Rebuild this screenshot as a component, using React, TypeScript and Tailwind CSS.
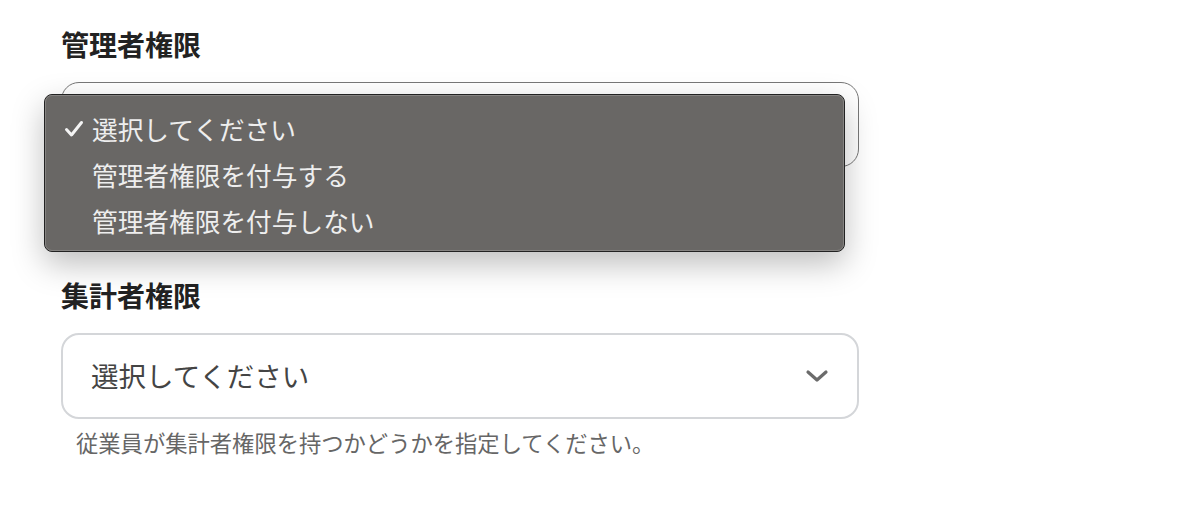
import React from 'react'

const font = { fontFamily: '"Noto Sans CJK JP", "Noto Sans", sans-serif' }

const Chevron = () => (
  <svg width="24" height="14" viewBox="0 0 24 14" fill="none">
    <path d="M3 3 L12 11 L21 3" stroke="#6b6b6b" strokeWidth="3.2" strokeLinecap="round" strokeLinejoin="round" />
  </svg>
)

const Check = () => (
  <svg width="20" height="18" viewBox="0 0 20 18" fill="none">
    <path d="M2.5 9.5 L7.5 15 L17.5 2.5" stroke="#f4f4f4" strokeWidth="3" strokeLinecap="round" strokeLinejoin="round" />
  </svg>
)

// hidden: content that sits under the open menu
const Field = ({ label, help, focused }: { label: string; help: string; focused?: boolean }) => (
  <div className="flex flex-col">
    <div className="h-[36px] leading-[36px] text-[28px] font-bold text-[#222]">{label}</div>
    <div
      className={
        focused
          ? 'mt-[20px] h-[85px] w-[798px] rounded-[18px] border-[1.5px] border-[#777] bg-white flex items-center justify-between px-[28px]'
          : 'mt-[20px] h-[86px] w-[798px] rounded-[18px] border-2 border-[#d4d6d9] bg-white flex items-center justify-between px-[28px]'
      }
    >
      <span className={focused ? 'invisible text-[27.5px] text-[#444]' : 'text-[27.5px] text-[#444]'}>選択してください</span>
      <Chevron />
    </div>
    <div className={focused ? 'invisible mt-[10px] pl-[15px] h-[27px] leading-[27px] text-[22.3px] text-[#666]' : 'mt-[10px] pl-[15px] h-[27px] leading-[27px] text-[22.3px] text-[#666]'}>{help}</div>
  </div>
)

const App = () => {
  const options = ['選択してください', '管理者権限を付与する', '管理者権限を付与しない']
  return (
    <div className="relative w-[1190px] h-[512px] bg-white overflow-hidden" style={font}>
      <div className="flex flex-col gap-[73px] pl-[61px] pt-[26px]">
        <Field label="管理者権限" help="従業員が管理者権限を持つかどうかを指定してください。" focused />
        <Field label="集計者権限" help="従業員が集計者権限を持つかどうかを指定してください。" />
      </div>

      {/* native select menu */}
      <div className="absolute left-[44px] top-[94px] w-[801px] h-[158px] rounded-[8px] border border-[#222] bg-[#696765] shadow-[0_12px_32px_rgba(0,0,0,0.26)]">
        <div className="h-full w-full rounded-[7px] border border-[#858381] pt-[10px]">
          {options.map((o, i) => (
            <div key={i} className="flex items-center h-[46px] text-[25.7px] text-[#eeeeee]">
              <span className="w-[46px] flex justify-end pr-[8px]">{i === 0 ? <Check /> : null}</span>
              <span>{o}</span>
            </div>
          ))}
        </div>
      </div>
    </div>
  )
}

export default App
